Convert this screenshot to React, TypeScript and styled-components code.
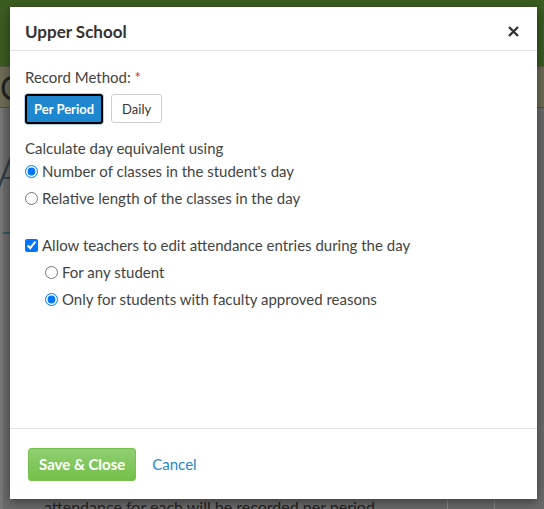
import React from "react";
import styled, { createGlobalStyle } from "styled-components";

const Global = createGlobalStyle`
  html, body { margin: 0; padding: 0; }
  body { font-family: Lato, "Open Sans", sans-serif; width: 544px; height: 509px; overflow: hidden; }
`;

const Page = styled.div`
  position: relative;
  width: 544px;
  height: 509px;
  overflow: hidden;
  background: #6b6b6b;
  display: flex;
  flex-direction: column;
`;

const TopBar = styled.div`
  height: 66px;
  background: #3b5c21;
  flex-shrink: 0;
`;

const Band = styled.div`
  height: 40px;
  background: #6e6c55;
  border-top: 1px solid #55563e;
  border-bottom: 1px solid #4f4f4f;
  display: flex;
  align-items: center;
  font-size: 32px;
  color: #222;
  flex-shrink: 0;
`;

const BgContent = styled.div`
  flex: 1;
  display: flex;
  flex-direction: column;
  border-left: 3px solid #777;
`;

const BgHeading = styled.div`
  font-size: 48px;
  color: #2d3c46;
  margin-top: 38px;
  margin-left: -7px;
  font-weight: 300;
  line-height: 50px;
`;

const BgRule = styled.div`
  height: 2px;
  background: #2e5865;
  width: 40px;
  margin-top: 36px;
`;

const BgFoot = styled.div`
  margin-top: auto;
  padding-left: 41px;
  padding-right: 49px;
  font-size: 16px;
  color: #222;
  height: 10px;
  line-height: 16px;
  display: flex;
  justify-content: space-between;
  align-items: flex-start;
`;

const BgBox = styled.div`
  width: 46px;
  height: 14px;
  border: 1px solid #888;
  border-radius: 3px;
  margin-top: -2px;
`;

const Modal = styled.div`
  position: absolute;
  left: 10px;
  top: 7px;
  width: 527px;
  height: 492px;
  background: #fff;
  box-shadow: 0 3px 10px rgba(0, 0, 0, 0.45);
  display: flex;
  flex-direction: column;
  color: #444;
`;

const Header = styled.div`
  height: 44px;
  border-bottom: 1px solid #e3e3e3;
  display: flex;
  align-items: center;
  justify-content: space-between;
  padding: 5px 18px 0 15px;
  flex-shrink: 0;
  box-sizing: border-box;
`;

const Title = styled.h4`
  margin: 0;
  font-size: 17px;
  font-weight: 700;
  color: #333;
`;

const Close = styled.button`
  border: 0;
  background: none;
  padding: 0;
  width: 12px;
  height: 12px;
  display: flex;
  align-items: center;
  justify-content: center;
  cursor: pointer;
`;

const Body = styled.div`
  flex: 1;
  padding: 16px 15px 0 15px;
  font-size: 15px;
  line-height: 21px;
`;

const Label = styled.div`
  margin-bottom: 6px;
`;

const Req = styled.span`
  color: #d9301e;
`;

const ButtonGroup = styled.div`
  display: flex;
  gap: 8px;
  margin-bottom: 15px;
`;

const ToggleBtn = styled.button<{ $active?: boolean }>`
  font-family: inherit;
  font-size: 13px;
  height: ${(p) => (p.$active ? "30px" : "29px")};
  padding: 0 ${(p) => (p.$active ? "7px" : "10px")};
  border-radius: 3px;
  cursor: pointer;
  ${(p) =>
    p.$active
      ? `
    background: #1f86d0;
    color: #fff;
    font-weight: 700;
    border: 2px solid #000;
    box-shadow: 0 0 0 1px #b7d2ea;
  `
      : `
    background: #fff;
    color: #333;
    font-weight: 400;
    border: 1px solid #cfcfcf;
  `}
`;

const Caption = styled.div`
  line-height: 19px;
`;

const Row = styled.label<{ $indent?: boolean }>`
  display: flex;
  align-items: center;
  height: 27px;
  padding-left: ${(p) => (p.$indent ? "20px" : "0")};
  color: #444;
  input {
    margin: 0 4px 0 0;
    width: 13px;
    height: 13px;
  }
`;

const Spacer = styled.div`
  height: 20px;
`;

const Footer = styled.div`
  height: 71px;
  border-top: 1px solid #e3e3e3;
  display: flex;
  align-items: center;
  padding: 0 18px;
  gap: 16px;
  flex-shrink: 0;
  box-sizing: border-box;
`;

const Primary = styled.button`
  font-family: inherit;
  font-size: 15px;
  font-weight: 700;
  color: #fff;
  height: 33px;
  padding: 0 10px;
  border: 1px solid #78c14f;
  border-radius: 3px;
  background: linear-gradient(#90cf72, #74c048);
  cursor: pointer;
`;

const LinkBtn = styled.a`
  font-size: 15px;
  color: #1f86d0;
  text-decoration: none;
  cursor: pointer;
`;

export default function App() {
  return (
    <>
      <Global />
      <Page>
        <TopBar />
        <Band>C</Band>
        <BgContent>
          <BgHeading>A</BgHeading>
          <BgRule />
          <BgFoot>
            <span>attendance for each will be recorded per period</span>
            <BgBox />
          </BgFoot>
        </BgContent>
        <Modal>
          <Header>
            <Title>Upper School</Title>
            <Close aria-label="Close">
              <svg width="11" height="11" viewBox="0 0 11 11">
                <path d="M1 1L10 10M10 1L1 10" stroke="#333" strokeWidth="2.4" />
              </svg>
            </Close>
          </Header>
          <Body>
            <Label>
              Record Method: <Req>*</Req>
            </Label>
            <ButtonGroup>
              <ToggleBtn $active>Per Period</ToggleBtn>
              <ToggleBtn>Daily</ToggleBtn>
            </ButtonGroup>
            <Caption>Calculate day equivalent using</Caption>
            <Row>
              <input type="radio" name="calc" defaultChecked />
              Number of classes in the student's day
            </Row>
            <Row>
              <input type="radio" name="calc" />
              Relative length of the classes in the day
            </Row>
            <Spacer />
            <Row>
              <input type="checkbox" defaultChecked />
              Allow teachers to edit attendance entries during the day
            </Row>
            <Row $indent>
              <input type="radio" name="edit" />
              For any student
            </Row>
            <Row $indent>
              <input type="radio" name="edit" defaultChecked />
              Only for students with faculty approved reasons
            </Row>
          </Body>
          <Footer>
            <Primary>Save &amp; Close</Primary>
            <LinkBtn>Cancel</LinkBtn>
          </Footer>
        </Modal>
      </Page>
    </>
  );
}
